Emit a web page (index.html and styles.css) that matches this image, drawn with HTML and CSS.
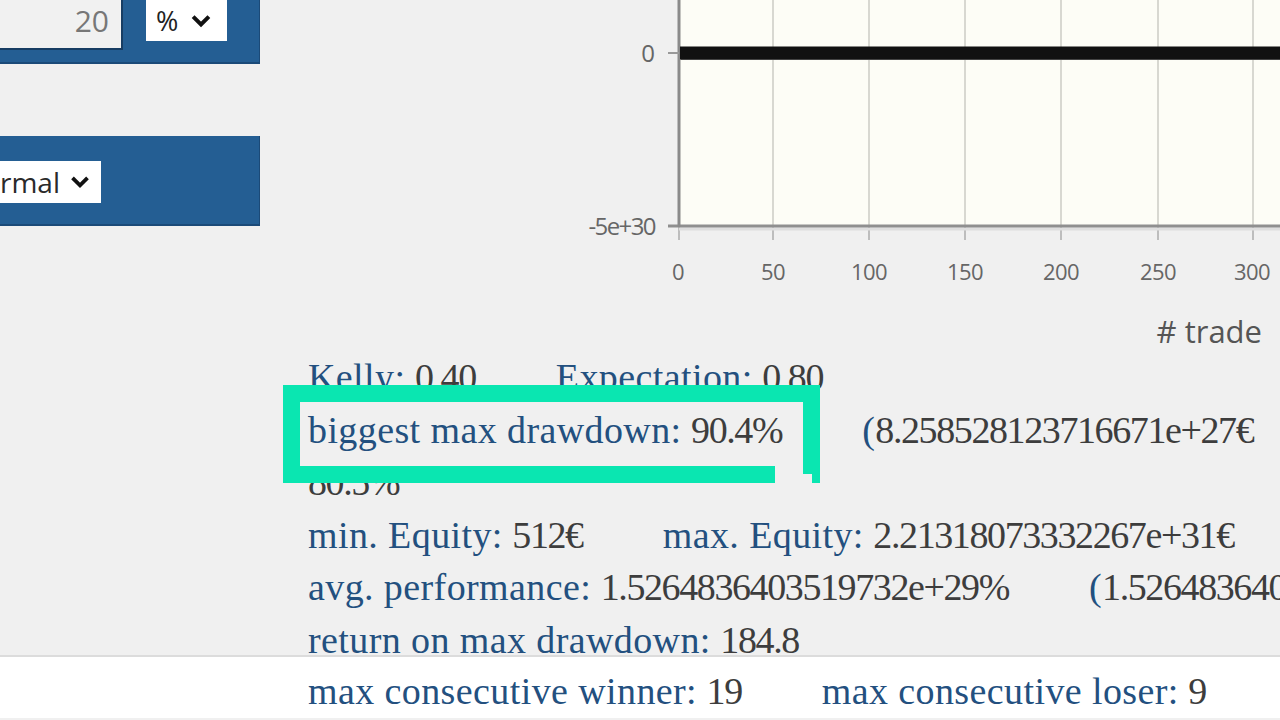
FILE: index.html
```html
<!DOCTYPE html>
<html>
<head>
<meta charset="utf-8">
<link rel="stylesheet" href="styles.css">
</head>
<body>
<div class="page">
  <div class="top">
    <div class="controls">
      <div class="panel panel-a">
        <div class="num-input">20</div>
        <div class="select sel-pct"><span>%</span>
          <svg class="chev" viewBox="0 0 24 16" width="22" height="14"><polyline points="3,3 12,12 21,3" fill="none" stroke="#111" stroke-width="4.5"/></svg>
        </div>
      </div>
      <div class="panel panel-b">
        <div class="select sel-mode"><span>rmal</span>
          <svg class="chev" viewBox="0 0 24 16" width="22" height="14"><polyline points="3,3 12,12 21,3" fill="none" stroke="#111" stroke-width="4.5"/></svg>
        </div>
      </div>
    </div>
    <div class="spacer"></div>
    <svg class="chart" width="720" height="351" viewBox="0 0 720 351">
      <rect x="119" y="0" width="601" height="226" fill="#fdfdf6"/>
      <g stroke="#cfcfc8" stroke-width="1.6">
        <line x1="213" y1="0" x2="213" y2="226"/>
        <line x1="309" y1="0" x2="309" y2="226"/>
        <line x1="405" y1="0" x2="405" y2="226"/>
        <line x1="501" y1="0" x2="501" y2="226"/>
        <line x1="598" y1="0" x2="598" y2="226"/>
        <line x1="693" y1="0" x2="693" y2="226"/>
      </g>
      <g stroke="#bdbdbd" stroke-width="2">
        <line x1="119" y1="226" x2="119" y2="240"/>
        <line x1="213" y1="226" x2="213" y2="240"/>
        <line x1="309" y1="226" x2="309" y2="240"/>
        <line x1="405" y1="226" x2="405" y2="240"/>
        <line x1="501" y1="226" x2="501" y2="240"/>
        <line x1="598" y1="226" x2="598" y2="240"/>
        <line x1="693" y1="226" x2="693" y2="240"/>
      </g>
      <line x1="119" y1="229" x2="720" y2="229" stroke="#dedede" stroke-width="3"/>
      <line x1="108" y1="226" x2="720" y2="226" stroke="#8f8f8f" stroke-width="3"/>
      <line x1="119" y1="0" x2="119" y2="227" stroke="#8a8a8a" stroke-width="3"/>
      <line x1="108" y1="53" x2="119" y2="53" stroke="#999" stroke-width="2"/>
      <line x1="121" y1="57" x2="720" y2="57" stroke="#777" stroke-width="6"/>
      <line x1="120" y1="53" x2="720" y2="53" stroke="#111" stroke-width="13"/>
      <g class="ax" fill="#666">
        <text x="95" y="62" text-anchor="end" font-size="24">0</text>
        <text x="95" y="235" text-anchor="end" font-size="24" letter-spacing="-1.6">-5e+30</text>
        <g font-size="22" text-anchor="middle" letter-spacing="-0.5">
          <text x="118" y="280">0</text>
          <text x="213" y="280">50</text>
          <text x="309" y="280">100</text>
          <text x="405" y="280">150</text>
          <text x="501" y="280">200</text>
          <text x="598" y="280">250</text>
          <text x="692" y="280">300</text>
        </g>
        <text x="702" y="343" text-anchor="end" font-size="31" fill="#555"># trade</text>
      </g>
    </svg>
  </div>
  <div class="stats">
    <div class="row"><span class="lab">Kelly:</span> <span class="val">0.40</span><span class="gap"><span class="lab">Expectation:</span> <span class="val">0.80</span></span></div>
    <div class="row"><span class="lab">biggest max drawdown:</span> <span class="val">90.4%</span><span class="gap"><span class="lab">(</span><span class="val">8.258528123716671e+27€</span></span></div>
    <div class="row"><span class="val">80.5%</span></div>
    <div class="row"><span class="lab">min. Equity:</span> <span class="val">512€</span><span class="gap"><span class="lab">max. Equity:</span> <span class="val">2.21318073332267e+31€</span></span></div>
    <div class="row"><span class="lab">avg. performance:</span> <span class="val">1.5264836403519732e+29%</span><span class="gap"><span class="lab">(</span><span class="val">1.5264836403519732e+27€</span></span></div>
    <div class="row"><span class="lab">return on max drawdown:</span> <span class="val">184.8</span></div>
  </div>
  <div class="footer">
    <div class="row"><span class="lab">max consecutive winner:</span> <span class="val">19</span><span class="gap"><span class="lab">max consecutive loser:</span> <span class="val">9</span></span></div>
  </div>
  <svg class="mark" width="540" height="100" viewBox="0 0 540 100">
    <rect x="0" y="0" width="537" height="17" fill="#0ae6b1"/>
    <rect x="0" y="0" width="17" height="98" fill="#0ae6b1"/>
    <rect x="0" y="81" width="492" height="17" fill="#0ae6b1"/>
    <rect x="520" y="0" width="17" height="89" fill="#0ae6b1"/>
    <rect x="529" y="0" width="8" height="98" fill="#0ae6b1"/>
  </svg>
</div>
</body>
</html>
```
FILE: styles.css
```css
html, body {
  margin: 0;
  padding: 0;
}
body {
  background: #f0f0f0;
  width: 1280px;
  height: 720px;
  overflow: hidden;
}
.page {
  position: relative;
  width: 1280px;
  height: 720px;
  overflow: hidden;
}
.top {
  display: flex;
  height: 351px;
}
.controls {
  width: 260px;
  display: flex;
  flex-direction: column;
}
.panel {
  background: #245e93;
  border-right: 1px solid #1b4a78;
  border-bottom: 2px solid #1b4a78;
  box-sizing: border-box;
  width: 260px;
}
.panel-a {
  height: 64px;
  display: flex;
  align-items: flex-start;
}
.num-input {
  width: 123px;
  height: 50px;
  box-sizing: border-box;
  background: #f1f1f1;
  border-right: 2px solid #173d63;
  border-bottom: 2px solid #173d63;
  font-family: "Open Sans", sans-serif;
  font-size: 30px;
  color: #777;
  text-align: right;
  padding-right: 12px;
  line-height: 42px;
}
.select {
  background: #fff;
  display: flex;
  align-items: center;
  font-family: "Open Sans", sans-serif;
  color: #222;
  box-sizing: border-box;
}
.sel-pct {
  margin-left: 23px;
  width: 81px;
  height: 41px;
  font-size: 27px;
  padding-left: 10px;
  gap: 12px;
}
.panel-b {
  margin-top: 72px;
  height: 90px;
  padding-top: 25px;
}
.sel-mode {
  width: 101px;
  height: 42px;
  font-size: 28px;
  gap: 10px;
  justify-content: flex-end;
  padding-right: 11px;
  color: #2a2a2a;
}
.spacer {
  width: 300px;
}
.chart {
  display: block;
  flex: none;
}
.ax {
  font-family: "Open Sans", sans-serif;
}
.stats, .footer {
  font-family: "Liberation Serif", serif;
  font-size: 38px;
  line-height: 52.5px;
  padding-left: 308px;
  white-space: nowrap;
}
.stats {
  height: 304px;
}
.footer {
  background: #fff;
  border-top: 2px solid #dcdcdc;
  height: 63px;
  padding-top: 8px;
  box-sizing: border-box;
}
.row {
  height: 52.5px;
}
.lab {
  color: #23507f;
  letter-spacing: 0.4px;
}
.val {
  color: #3d3d3d;
  letter-spacing: -1.4px;
}
.gap {
  margin-left: 80px;
}
.mark {
  position: absolute;
  left: 283px;
  top: 385px;
}
```
